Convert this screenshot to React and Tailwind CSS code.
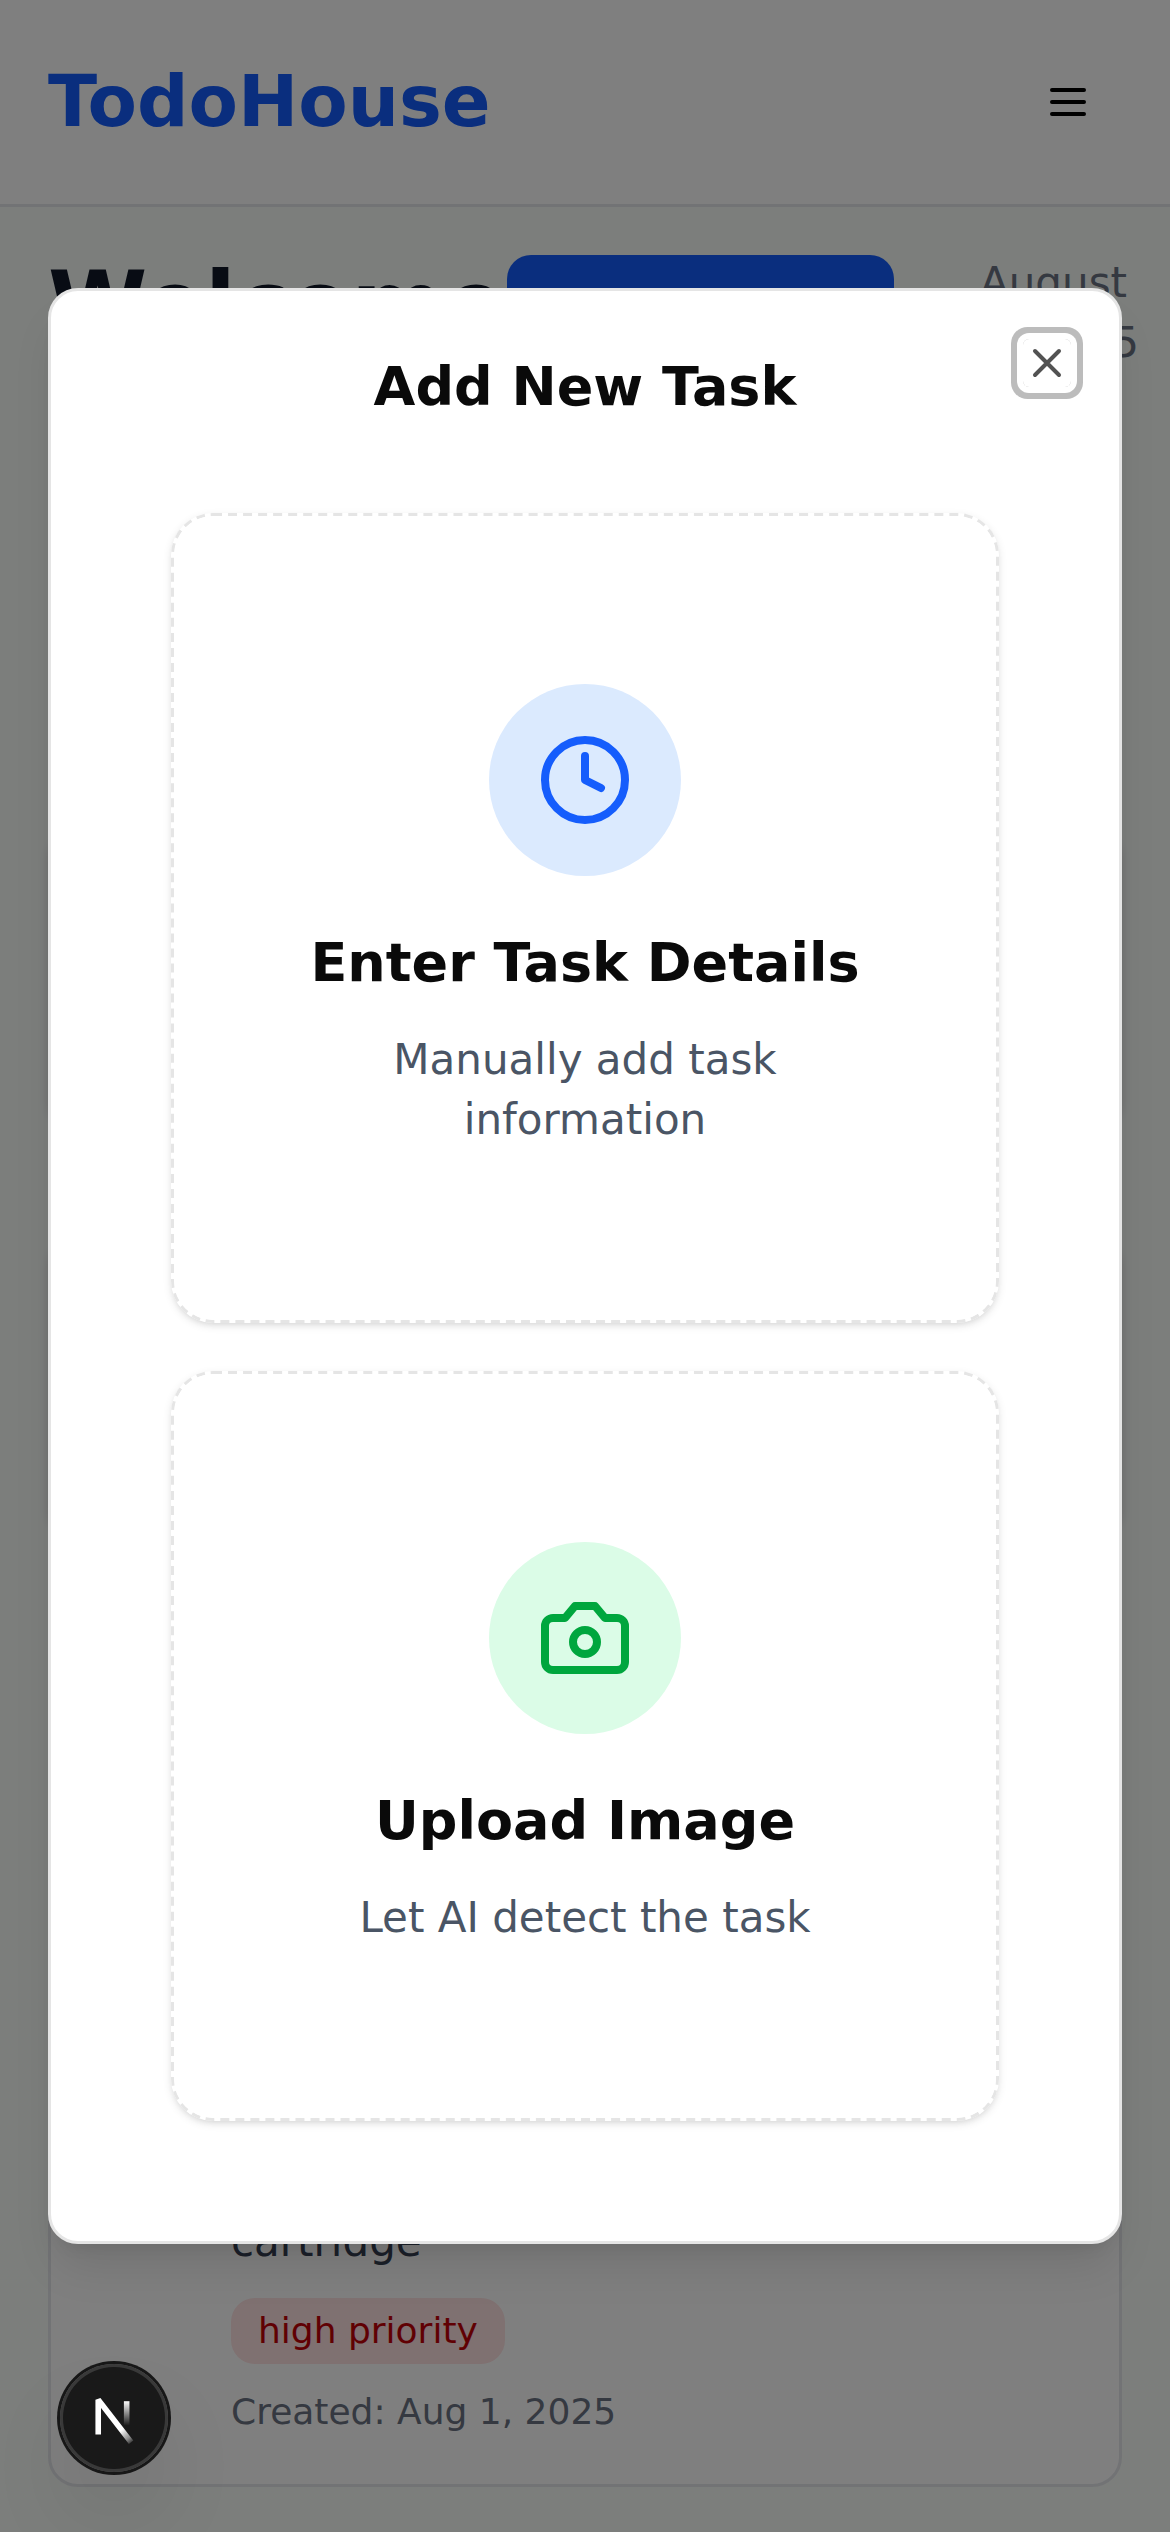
import React from "react";

const FONT = "font-['DejaVu_Sans',sans-serif]";

function MenuIcon() {
  return (
    <svg className="size-12" viewBox="0 0 24 24" fill="none" stroke="currentColor" strokeWidth="2" strokeLinecap="round">
      <path d="M4 6h16M4 12h16M4 18h16" />
    </svg>
  );
}

function ClockIcon() {
  return (
    <svg className="size-24 text-blue-600" viewBox="0 0 24 24" fill="none" stroke="currentColor" strokeWidth="2" strokeLinecap="round" strokeLinejoin="round">
      <circle cx="12" cy="12" r="10" />
      <path d="M12 6v6l4 2" />
    </svg>
  );
}

function CameraIcon() {
  return (
    <svg className="size-24 text-green-600" viewBox="0 0 24 24" fill="none" stroke="currentColor" strokeWidth="2" strokeLinecap="round" strokeLinejoin="round">
      <path d="M14.5 4h-5L7 7H4a2 2 0 0 0-2 2v9a2 2 0 0 0 2 2h16a2 2 0 0 0 2-2V9a2 2 0 0 0-2-2h-3l-2.5-3z" />
      <circle cx="12" cy="13" r="3" />
    </svg>
  );
}

function OptionCard({ icon, tint, title, children }) {
  return (
    <button className="relative flex w-full flex-col items-center rounded-[42px] bg-white px-[147px] pt-[171px] pb-[173px] text-center shadow-[0_3px_9px_0_rgb(0_0_0/0.1),0_3px_6px_-3px_rgb(0_0_0/0.1)]">
      <span className="pointer-events-none absolute top-0 left-0 h-1/3 w-1/3 origin-top-left scale-300 rounded-[14px] border border-dashed border-neutral-200" />
      <span className={"mb-[45px] flex size-48 items-center justify-center rounded-full " + tint}>{icon}</span>
      <span className="mb-[25px] text-[54px] leading-[84px] font-semibold whitespace-nowrap text-neutral-950">{title}</span>
      <span className="text-[42px] leading-[60px] text-gray-600">{children}</span>
    </button>
  );
}

function DevBadge() {
  return (
    <div className="absolute top-[2364px] left-[60px] z-20 size-[108px] rounded-full bg-black/80 shadow-[0_0_0_3px_#171717,inset_0_0_0_3px_rgb(255_255_255/0.14),0_48px_96px_-24px_rgb(0_0_0/0.24)]">
      <svg className="size-full" viewBox="0 0 36 36" fill="none">
        <defs>
          <linearGradient id="diag" x1="9.956" y1="11.123" x2="13.8" y2="15.9" gradientUnits="userSpaceOnUse">
            <stop stopColor="white" />
            <stop offset="0.604" stopColor="white" stopOpacity="0.494" />
            <stop offset="1" stopColor="white" stopOpacity="0" />
          </linearGradient>
          <linearGradient id="stem" x1="11.822" y1="1.4" x2="11.792" y2="9.625" gradientUnits="userSpaceOnUse">
            <stop stopColor="white" />
            <stop offset="1" stopColor="white" stopOpacity="0" />
          </linearGradient>
        </defs>
        <g transform="translate(10.4 10.9)" strokeWidth="1.86">
          <path d="M13.3 15.2 L2.34 1 V12.6" stroke="url(#diag)" strokeLinejoin="bevel" />
          <path d="M11.825 1.5 V13.1" stroke="url(#stem)" />
        </g>
      </svg>
    </div>
  );
}

function Page() {
  return (
    <div className="flex h-full flex-col bg-[#f8fcf9]">
      <header className="flex h-[207px] items-center justify-between border-b-3 border-gray-200 bg-white pr-[78px] pl-12">
        <h1 className="pb-[2px] text-[72px] leading-24 font-bold text-blue-600">TodoHouse</h1>
        <MenuIcon />
      </header>
      <main className="flex grow flex-col px-12 pt-12 pb-[45px]">
        <div className="flex h-[120px] items-start">
          <h2 className="mt-[-4px] w-[459px] text-[90px] leading-[108px] font-bold text-gray-900">Welcome</h2>
          <div className="h-[108px] w-[387px] rounded-[24px] bg-blue-600" />
          <div className="mt-[-2px] flex grow flex-col items-end text-[42px] leading-[60px] whitespace-nowrap text-gray-500">
            <span className="mr-[-5px]">August</span>
            <span className="mr-[-17px]">1, 2025</span>
          </div>
        </div>
        <div className="mt-[453px] flex flex-col gap-27">
          <div className="h-[300px] rounded-[30px] bg-white shadow-[0_3px_9px_0_rgb(60_20_40/0.14)]" />
          <div className="h-[300px] rounded-[30px] bg-white shadow-[0_3px_9px_0_rgb(60_20_40/0.14)]" />
        </div>
        <section className="mt-auto flex flex-col items-start rounded-[30px] border-3 border-gray-200 bg-white pt-[400px] pr-12 pb-[48px] pl-[180px]">
          <p className="text-[42px] leading-[60px] text-gray-700">cartridge</p>
          <span className="mt-[26px] rounded-[24px] border-3 border-transparent bg-red-100 px-6 py-1.5 text-[36px] leading-12 text-red-700">high priority</span>
          <p className="mt-6 text-[36px] leading-12 text-gray-500">Created: Aug 1, 2025</p>
        </section>
      </main>
    </div>
  );
}

export default function App() {
  return (
    <div className={"relative h-[2532px] w-[1170px] overflow-hidden " + FONT}>
      <Page />
      <div className="absolute inset-0 z-10 bg-black/50 px-12 pt-72">
        <div role="dialog" className="relative h-[1956px] rounded-[30px] border-3 border-neutral-200 bg-white px-30 shadow-[0_30px_45px_-9px_rgb(0_0_0/0.1),0_12px_18px_-12px_rgb(0_0_0/0.1)]">
          <h2 className="pt-[69px] text-center text-[54px] leading-[54px] font-semibold text-neutral-950">Add New Task</h2>
          <div className="mt-[99px] flex flex-col gap-12">
            <OptionCard icon={<ClockIcon />} tint="bg-blue-100" title="Enter Task Details">
              Manually add task information
            </OptionCard>
            <OptionCard icon={<CameraIcon />} tint="bg-green-100" title="Upload Image">
              Let AI detect the task
            </OptionCard>
          </div>
          <button aria-label="Close" className="absolute top-12 right-12 size-12 rounded-[6px] text-neutral-950 opacity-70 shadow-[0_0_0_6px_#fff,0_0_0_12px_#a1a1a1]">
            <svg className="size-12" viewBox="0 0 24 24" fill="none" stroke="currentColor" strokeWidth="2" strokeLinecap="round">
              <path d="M18 6 6 18M6 6l12 12" />
            </svg>
          </button>
        </div>
      </div>
      <DevBadge />
    </div>
  );
}
